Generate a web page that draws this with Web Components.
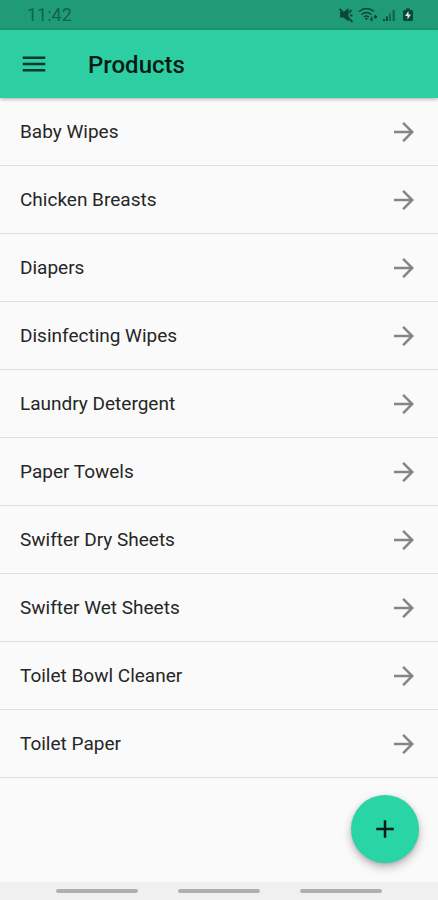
<!DOCTYPE html>
<html lang="en">
<head>
<meta charset="utf-8">
<meta name="viewport" content="width=device-width, initial-scale=1">
<title>Products</title>
<style>
  html, body { height: 100%; margin: 0; }
  body { font-family: Roboto, "Liberation Sans", sans-serif; background: #fafafa; color: #262626; }
</style>
</head>
<body>
<products-app></products-app>
<script>
  const define = (name, html, setup) => {
    const template = document.createElement('template');
    template.innerHTML = html;
    customElements.define(name, class extends HTMLElement {
      constructor() {
        super();
        this.attachShadow({ mode: 'open' }).append(template.content.cloneNode(true));
        if (setup) setup(this.shadowRoot);
      }
    });
  };

  define('status-bar', `
    <style>
      :host { display: flex; align-items: center; justify-content: space-between; height: 30px; padding: 0 22px 0 27px; background: #209b77; color: #11634c; font-size: 18px; line-height: 20px; }
      .icons { display: flex; align-items: center; gap: 4px; color: #0b4637; }
      svg { display: block; fill: currentColor; }
    </style>
    <time>11:42</time>
    <div class="icons">
      <svg width="16" height="16" viewBox="0 0 16 16" aria-label="Muted"><path d="M2 5h3.500L10.500 1v13.500L5.500 10.500H2z"/><path d="M1.500 2L14.500 15M11 6l2.500-3M12 8.500h2.500" fill="none" stroke="currentColor" stroke-width="1.800"/></svg>
      <svg width="20" height="16" viewBox="0 0 20 16" aria-label="Wi-Fi"><g fill="none" stroke="currentColor" stroke-width="1.300"><path d="M1 4.500q7.500-6 15 0M3.500 7.500q5-4 10 0M6 10q2.500-2 5 0"/></g><path d="M7 11.500l1.500-1 1.500 1-1.500 1.500zM11.500 11.500H13V9.500h1v2h1.500l-2 3zM15.500 10l2-2.500 2 2.500-2 2z"/></svg>
      <svg width="14" height="16" viewBox="0 0 14 16" aria-label="Signal"><path d="M1 12h2v2H1zM4 9.500h2V14H4z"/><path d="M7 6.500h2V14H7zM10.500 3H13v11h-2.500z" opacity=".6"/></svg>
      <svg width="16" height="16" viewBox="0 0 16 16" aria-label="Battery charging"><path d="M6 1.500h4V3h1.500A1.500 1.500 0 0 1 13 4.500v8a1.500 1.500 0 0 1-1.500 1.500h-7A1.500 1.500 0 0 1 3 12.500v-8A1.500 1.500 0 0 1 4.500 3H6z"/><path d="M8.500 4L5 9h2.500v3.500L11 7.500H8.500z" fill="#c5eee1"/></svg>
    </div>
  `);

  define('app-bar', `
    <style>
      :host { display: flex; align-items: center; gap: 34px; height: 68px; padding: 0 14px; background: #2dcfa2; color: #051c15; box-shadow: 0 1px 4px rgba(0,0,0,.32); position: relative; }
      button { display: grid; place-items: center; width: 40px; height: 40px; padding: 0; border: 0; background: none; color: #05382c; cursor: pointer; }
      svg { display: block; fill: currentColor; }
      h1 { margin: 0; padding-top: 2px; font-size: 24px; line-height: 32px; font-weight: 500; }
    </style>
    <button type="button" aria-label="Open menu"><svg width="30" height="30" viewBox="0 0 24 24"><path d="M3 18h18v-2H3v2zm0-5h18v-2H3v2zm0-7v2h18V6H3z"/></svg></button>
    <h1><slot></slot></h1>
  `);

  define('product-item', `
    <style>
      :host { display: block; border-bottom: 1px solid #dfdfdf; }
      a { display: flex; align-items: center; justify-content: space-between; height: 67px; padding: 0 19px 0 20px; color: inherit; text-decoration: none; font-size: 19px; line-height: 24px; }
      svg { display: block; fill: #858585; flex: none; }
    </style>
    <a href="#"><slot></slot><svg width="30" height="30" viewBox="0 0 24 24" aria-hidden="true"><path d="M12 4l-1.410 1.410L16.170 11H4v2h12.170l-5.580 5.590L12 20l8-8z"/></svg></a>
  `);

  define('add-button', `
    <style>
      :host { display: block; }
      button { display: grid; place-items: center; width: 68px; height: 68px; padding: 0; border: 0; border-radius: 50%; background: #29d4a5; color: #051c15; box-shadow: 0 4px 8px rgba(60,40,55,.34), 0 1px 3px rgba(0,0,0,.12); cursor: pointer; }
      svg { display: block; fill: currentColor; }
    </style>
    <button type="button" aria-label="Add product"><svg width="30" height="30" viewBox="0 0 24 24"><path d="M19 13h-6v6h-2v-6H5v-2h6V5h2v6h6v2z"/></svg></button>
  `);

  define('navigation-bar', `
    <style>
      :host { display: grid; grid-template-columns: repeat(3, 1fr); align-items: center; height: 18px; padding: 0 36px; background: #f0f0f0; }
      button { display: grid; place-items: center; height: 18px; padding: 0; border: 0; background: none; }
      span { width: 82px; height: 4px; border-radius: 2px; background: #b0b0b0; }
    </style>
    <button type="button" aria-label="Recents"><span></span></button>
    <button type="button" aria-label="Home"><span></span></button>
    <button type="button" aria-label="Back"><span></span></button>
  `);

  const products = ['Baby Wipes', 'Chicken Breasts', 'Diapers', 'Disinfecting Wipes', 'Laundry Detergent', 'Paper Towels', 'Swifter Dry Sheets', 'Swifter Wet Sheets', 'Toilet Bowl Cleaner', 'Toilet Paper'];

  define('products-app', `
    <style>
      :host { display: flex; flex-direction: column; min-height: 100vh; }
      main { flex: 1; display: flex; flex-direction: column; }
      .actions { display: flex; flex: 1; justify-content: flex-end; align-items: flex-end; padding: 16px 19px 19px; }
    </style>
    <status-bar></status-bar>
    <app-bar>Products</app-bar>
    <main>
      <div class="list" role="list"></div>
      <div class="actions"><add-button></add-button></div>
    </main>
    <navigation-bar></navigation-bar>
  `, root => {
    root.querySelector('.list').append(...products.map(name => {
      const item = document.createElement('product-item');
      item.setAttribute('role', 'listitem');
      item.textContent = name;
      return item;
    }));
  });
</script>
</body>
</html>
